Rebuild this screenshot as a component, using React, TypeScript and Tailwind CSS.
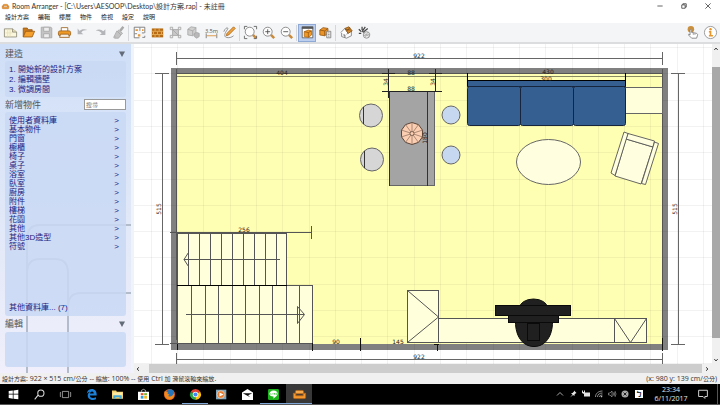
import type { ReactNode } from "react"

const uiFont = "font-['Open_Sans','Noto_Sans_CJK_TC',sans-serif]"
const titleFont = "font-['Lato','Noto_Sans_CJK_TC',sans-serif]"
const listFont = "font-['Liberation_Sans','Noto_Sans_CJK_TC',sans-serif]"

const menus = ["設計方案", "編輯", "樓層", "物件", "檢視", "設定", "說明"]

const steps = ["1. 開始新的設計方案", "2. 編輯牆壁", "3. 微調房間"]

const categories = [
  "使用者資料庫",
  "基本物件",
  "門窗",
  "櫥櫃",
  "椅子",
  "桌子",
  "浴室",
  "臥室",
  "廚房",
  "附件",
  "樓梯",
  "花園",
  "其他",
  "其他3D造型",
  "符號",
]

type Item = { label: string; icon: ReactNode; active?: boolean; running?: boolean }

const fileTools: Item[] = [
  {
    label: "新增",
    icon: (
      <g stroke="#8a8674" fill="#fbf7dc">
        <path d="M.5 3.500h10l5 4v6H.5z" />
        <path d="M4.500 4v9M7.500 4v9M2 8.500h8" stroke="#e6dfbd" />
        <path d="M10.500 3.500v4h5" fill="#e8dfb4" />
      </g>
    ),
  },
  {
    label: "開啟",
    icon: (
      <g stroke="#9a5a10">
        <path d="M1.500 13.500v-11h5l1 2h5v3" fill="#c9781c" />
        <path d="M1.500 13.500l3-7h11l-3 7z" fill="#f5a02c" />
      </g>
    ),
  },
  {
    label: "儲存",
    icon: (
      <g stroke="#a5a5a5" fill="#c4c4c4">
        <path d="M1.500 1.500h12l1 1v12h-13z" />
        <path d="M4.500 1.500h7v5h-7zM4.500 9.500h7v5h-7z" fill="#ededed" />
      </g>
    ),
  },
  {
    label: "列印",
    icon: (
      <g stroke="#9a5f1a">
        <path d="M4 7V2h8v5" fill="#fff" />
        <rect x="0.5" y="6" width="15" height="6" rx="2" fill="#f09a26" />
        <path d="M3 10h10l1 4H2z" fill="#f4efe5" />
      </g>
    ),
  },
  {
    label: "復原",
    icon: <path d="M2 3v7h7L6.5 8c1.500-2 4-3 7.500-3-4-2-7.500-1-9.500 1z" fill="#b3b5b8" />,
  },
  {
    label: "重做",
    icon: <path d="M14 4v7H7l2.500-2C8 7 5.500 5.500 2 5.500c4-2.500 7.500-1 9.500 1z" fill="#b3b5b8" />,
  },
  {
    label: "格式",
    icon: (
      <g fill="#c3c3c3" stroke="#a9a9a9">
        <path d="M14 1l-4 5" strokeWidth="3" />
        <path d="M8 5l5 4-2 2-4-4z" />
        <path d="M6 6l5 5-3 4H3l1-2-2 1z" />
      </g>
    ),
  },
]

const drawTools: Item[] = [
  {
    label: "房間",
    icon: (
      <g fill="none" stroke="#6b6b6b">
        <path d="M1.500 1.500h13v7M14.500 12v2h-3M8 14.500H1.500v-13" fill="#fff" />
        <path d="M8.500 2v4M2 9.500h3M11 8.500h3" />
        <path d="M3 4h3v2H3zM11 4h2v2h-2zM6 10h3v3H6z" fill="#e59a3a" stroke="none" />
      </g>
    ),
  },
  {
    label: "牆壁",
    icon: (
      <g>
        <path d="M1 3h14v11H1z" fill="#b66b14" />
        <path d="M1 6.500h14M1 10.500h14M5 3v3M10 3v3M3 7v3M8 7v3M13 7v3M5 11v3M10 11v3" stroke="#f0b965" />
      </g>
    ),
  },
  {
    label: "調整",
    icon: (
      <g stroke="#a2a2a2" fill="#c8c8c8">
        <rect x="4.500" y="4.500" width="7" height="7" />
        <path d="M1.500 1.500h3v3h-3zM11.500 1.500h3v3h-3zM1.500 11.500h3v3h-3zM11.500 11.500h3v3h-3z" fill="#ededed" />
        <path d="M4 4l8 8" />
      </g>
    ),
  },
  {
    label: "物件",
    icon: (
      <g stroke="#a5a5a5" fill="#d0d0d0">
        <path d="M1 4l4-3 6 1v7l-4 3-6-1z" />
        <path d="M1 4l6 2 4-4M7 6v6" fill="none" />
        <path d="M9 9l3-1 3 1v4l-3 2-3-2z" fill="#b8b8b8" />
      </g>
    ),
  },
  {
    label: "尺寸",
    icon: (
      <g stroke="#6d6d6d">
        <path d="M1.500 9v6M14.500 9v6" />
        <path d="M2 12h12" stroke="#d88a2a" />
        <text x="8" y="8" fontSize="7" textAnchor="middle" fill="#555" stroke="none">
          3.5m
        </text>
      </g>
    ),
  },
  {
    label: "繪製",
    icon: (
      <g>
        <path d="M1 7c2-6 7-6 4-2s-4 8-1 9 7 0 9-2" fill="none" stroke="#808080" />
        <path d="M4 12l1-3 8-8 2 2-8 8z" fill="#f2a33c" stroke="#a8661b" />
      </g>
    ),
  },
]

const lens = (inner: ReactNode) => (
  <g fill="none" stroke="#777">
    <path d="M11 11l4 4" stroke="#c98a3a" strokeWidth="3" />
    <circle cx="7" cy="7" r="5.500" fill="#fdfdfd" />
    {inner}
  </g>
)

const zoomTools: Item[] = [
  {
    label: "全部顯示",
    icon: (
      <g>
        {lens(null)}
        <path d="M.5 4V.5H4M12 .5h3.500V4M.5 12v3.500H4M12 15.500h3.500V12" fill="none" stroke="#555" />
      </g>
    ),
  },
  { label: "放大", icon: lens(<path d="M4 7h6M7 4v6" stroke="#444" />) },
  { label: "縮小", icon: lens(<path d="M4 7h6" stroke="#444" />) },
]

const panelTools: Item[] = [
  {
    label: "物件面板",
    active: true,
    icon: (
      <g stroke="#555">
        <path d="M1.500 1.500h13v13h-13z" fill="#fff" />
        <path d="M1 2h14" strokeWidth="3" />
        <path d="M4 7l5-2 4 1v5l-4 3-5-1z" fill="#f29a26" stroke="#b56a16" />
        <path d="M4 7l5 1 4-2M9 8v6" fill="none" stroke="#985710" />
      </g>
    ),
  },
  {
    label: "物件清單",
    icon: (
      <g stroke="#985710">
        <path d="M1 5l4-3 6 1v6l-4 3-6-1z" fill="#ea9428" />
        <path d="M1 5l6 1 4-3M7 6v6" fill="none" />
        <path d="M9.500 6.500h5v8h-5z" fill="#f5f5f5" stroke="#777" />
        <path d="M11 8.500h2M11 10.500h2M11 12.500h2" stroke="#888" />
      </g>
    ),
  },
]

const viewTools: Item[] = [
  {
    label: "3D",
    icon: (
      <g stroke="#777">
        <path d="M2 8v5l6 2 6-3V6" fill="#fafafa" />
        <path d="M1 8l5-5 4 6-2 1" fill="#fff" />
        <path d="M6 3l5-2 4 5-5 3z" fill="#d98b2b" stroke="#7c4d16" />
        <path d="M7 4l6 1M9 6l3-4" stroke="#7c4d16" />
        <path d="M4 11h2v3" fill="none" stroke="#555" />
      </g>
    ),
  },
  {
    label: "渲染",
    icon: (
      <g fill="none" stroke="#444">
        <path d="M9 1L5 7M12 3L6 8M1 4l3 3M1 9h3M5 1v4" strokeWidth="1.500" />
        <circle cx="10.500" cy="11" r="4" fill="#ededed" stroke="#888" />
        <path d="M7 9l7 4M9 14l3-7M7 12l8-2" stroke="#aaa" />
      </g>
    ),
  },
]

const helpTools: Item[] = [
  {
    label: "觸控",
    icon: (
      <g>
        <circle cx="6" cy="4" r="4" fill="#c98f3d" />
        <path d="M5 11V5q1-2 2 0v3l6 1q2 1 1 3l-1 3H7l-4-4q0-2 2 0z" fill="#fff" stroke="#777" />
        <path d="M9 8v3M11 9v2" stroke="#999" />
      </g>
    ),
  },
  {
    label: "關於",
    icon: (
      <g>
        <circle cx="8" cy="8" r="7.500" fill="#fff" stroke="#8a8a8a" />
        <path d="M6 7h2v5M6 12h5" fill="none" stroke="#e9952a" strokeWidth="2" />
        <circle cx="8" cy="4" r="1.500" fill="#e9952a" />
      </g>
    ),
  },
]

const taskbarApps: Item[] = [
  { label: "開始", icon: <path d="M1 3l6-1v5H1zM8 2l7-1v6H8zM1 8h6v6l-6-1zM8 8h7v7l-7-1z" fill="#fff" /> },
  {
    label: "搜尋",
    icon: (
      <g fill="none" stroke="#ddd" strokeWidth="1.500">
        <circle cx="10" cy="6" r="4.500" />
        <path d="M6 9l-5 6" />
      </g>
    ),
  },
  { label: "工作檢視", icon: <path d="M3.500 3.500h9v9h-9zM1.500 5h-1v6h1M14.500 5h1v6h-1" fill="none" stroke="#ccc" /> },
  {
    label: "Edge",
    icon: (
      <path
        d="M1 7C2 2 5 0 8.500 0 13 0 15.500 3.500 15.500 7.500V9.500H5.500c.5 4 5 4.500 9 2.500v3c-5 2.500-12 .5-12-5.500C2.500 7 4 5 6 4 3.500 4.300 2 5.500 1 7zM5.800 6.500h5.500C11.300 2.500 6.500 2.500 5.800 6.500z"
        fill="#1e7fd6"
      />
    ),
  },
  {
    label: "檔案總管",
    icon: (
      <g>
        <path d="M0 2h6l1 2h9v10H0z" fill="#f3cf6b" />
        <path d="M1 5h14v5H1z" fill="#fbe9a5" />
        <path d="M2 14V9h12v5h-3v-2H5v2z" fill="#45a9d8" />
      </g>
    ),
  },
  {
    label: "市集",
    icon: (
      <g>
        <path d="M5 4V2q3-3 6 0v2" fill="none" stroke="#eee" />
        <path d="M0 4h16v12H0z" fill="#fff" />
        <path d="M4 6h4v3H4z" fill="#e8502a" />
        <path d="M9 6h4v3H9z" fill="#7db52c" />
        <path d="M4 10h4v4H4z" fill="#2d9fe0" />
        <path d="M9 10h4v4H9z" fill="#f3b51c" />
      </g>
    ),
  },
  {
    label: "Firefox",
    icon: (
      <g>
        <circle cx="8" cy="8" r="8" fill="#e4601d" />
        <circle cx="9" cy="6" r="5.500" fill="#2774b8" />
        <path d="M1 3c1 1 3 1 5 2l-1 2 3 1-2 2c3 2 7 0 8-4 2 5-2 9-6 9S-1 11 1 3z" fill="#f28a1e" />
      </g>
    ),
  },
  {
    label: "Chrome",
    running: true,
    icon: (
      <g>
        <path d="M8 8L1 4A8 8 0 0 1 15 4z" fill="#e34133" />
        <path d="M8 8V16A8 8 0 0 1 1 4z" fill="#2ba24c" />
        <path d="M8 8V16A8 8 0 0 0 15 4z" fill="#fbc116" />
        <circle cx="8" cy="8" r="4" fill="#fff" />
        <circle cx="8" cy="8" r="3" fill="#4285f4" />
      </g>
    ),
  },
  {
    label: "媒體播放器",
    icon: (
      <g>
        <path d="M0 1h15v14H0z" fill="#7fa6bd" />
        <circle cx="7" cy="8" r="5.500" fill="#e77d32" stroke="#f5d3b8" />
        <path d="M5 5l6 3-6 3z" fill="#fff" />
      </g>
    ),
  },
  {
    label: "郵件",
    icon: (
      <g>
        <path d="M0 5l8-5 8 5v11H0z" fill="#fff" />
        <path d="M1 6h14L9 9l3 3-11-6z" fill="#111" />
      </g>
    ),
  },
  {
    label: "LINE",
    running: true,
    icon: (
      <g>
        <rect width="16" height="16" rx="2" fill="#1bb51b" />
        <path d="M8 2c4 0 6 2 6 5s-3 4-6 7v-3c-4 0-6-2-6-4s2-5 6-5z" fill="#fff" />
        <path d="M4 6v2h1M7 6v2M9 8V6l1 2V6M13 6h-1v2h1" fill="none" stroke="#1bb51b" strokeWidth=".8" />
      </g>
    ),
  },
  {
    label: "Room Arranger",
    active: true,
    running: true,
    icon: <SofaShape />,
  },
]

const tray: Item[] = [
  { label: "顯示隱藏的圖示", icon: <path d="M2 11l6-6 6 6" fill="none" stroke="#ddd" strokeWidth="1.500" /> },
  { label: "釘選", icon: <path d="M10 1l5 5-2 1-2 2v3l-3-2-6 5 5-6-3-3h3l3-3z" fill="#e8e8e8" /> },
  { label: "電池", icon: <path d="M0 1h2v3h2V1h2v4h10v8H4V8L0 6z" fill="#e5e5e5" /> },
  {
    label: "網路",
    icon: (
      <g fill="none" stroke="#bbb" strokeWidth="1.500">
        <path d="M1 14C1 7 7 2 15 2M5 14c0-5 4-8 10-8M9 14c0-3 2-4 6-4" />
        <circle cx="13" cy="13" r="1" fill="#fff" />
      </g>
    ),
  },
  {
    label: "音量",
    icon: <path d="M1 6h3l4-4v12l-4-4H1zM10 5q2 3 0 6M12 4q3 4 0 8M14 2q4 6 0 12" fill="none" stroke="#ccc" />,
  },
  {
    label: "狀態",
    icon: (
      <g>
        <circle cx="8" cy="8" r="7" fill="#aaa" />
        <path d="M5 5l6 6M11 5l-6 6" stroke="#222" strokeWidth="2" />
      </g>
    ),
  },
]

function SofaShape() {
  return (
    <g stroke="#b4661a">
      <path d="M3 7V4.500Q3 3 4.500 3h7Q13 3 13 4.500V7z" fill="#f6a94a" />
      <path d="M.5 6.500h3v3h9v-3h3v5q0 1.500-1.500 1.500H2Q.5 13 .5 11.500z" fill="#f2962d" />
    </g>
  )
}

function Icon({ children, className }: { children: ReactNode; className: string }) {
  return (
    <svg viewBox="0 0 16 16" className={`${className} overflow-visible`} aria-hidden="true">
      {children}
    </svg>
  )
}

function ToolGroup({ items }: { items: Item[] }) {
  return (
    <div className="flex">
      {items.map((item) => (
        <button
          key={item.label}
          aria-label={item.label}
          className={`flex h-[18px] w-[18px] items-center justify-center ${
            item.active ? "border border-[#8fa9d6] bg-[#bccfee]" : ""
          }`}
        >
          <Icon className="h-[13px] w-[13px] shrink-0">{item.icon}</Icon>
        </button>
      ))}
    </div>
  )
}

function Separator() {
  return <div className="mx-px h-4 w-px bg-[#d5d7da]" />
}

function TitleBar() {
  return (
    <header className="flex h-3 items-center bg-white pl-[2px] text-[7px] leading-3 text-[#333]">
      <Icon className="mr-[3px] h-[7px] w-[7px]">
        <SofaShape />
      </Icon>
      <h1 className={`flex-1 whitespace-nowrap ${titleFont}`}>
        Room Arranger - [C:\Users\AESOOP\Desktop\設計方案.rap] - 未註冊
      </h1>
      {[
        { label: "最小化", d: "M1 8h14" },
        { label: "還原", d: "M2 5h9v9H2zM5 5V2h9v9h-3" },
        { label: "關閉", d: "M1 1l14 14M15 1L1 15" },
      ].map((control) => (
        <button key={control.label} aria-label={control.label} className="flex w-6 justify-center">
          <Icon className="h-[6px] w-[6px]">
            <path d={control.d} fill="none" stroke="#333" strokeWidth="2" />
          </Icon>
        </button>
      ))}
    </header>
  )
}

function SidebarHeading({ children }: { children: ReactNode }) {
  return (
    <div className="flex h-[14px] items-center justify-between pr-px text-[#555]">
      <h2 className="text-[9px] leading-[14px]">{children}</h2>
      <button aria-label="收合" className="flex w-[6px]">
        <Icon className="h-[6px] w-[6px]">
          <path d="M0 1h16L8 16z" fill="#626b78" />
        </Icon>
      </button>
    </div>
  )
}

function Sidebar() {
  return (
    <aside
      className={`relative flex w-[131px] shrink-0 flex-col bg-linear-to-b from-[#cfdff7] via-[#e0e8f8] to-[#f0effb] px-[5px] pt-[3px] pb-[6px] text-[8px] text-[#1b1b80] ${listFont}`}
    >
      <svg viewBox="0 0 131 329" preserveAspectRatio="none" className="absolute inset-0 h-full w-full" aria-hidden="true">
        <path
          d="M131 181H40q-13 0-13 14V329M27 229q0-14 13-14h15q13 0 13 14V329M68 263q0-14 13-14h50"
          fill="none"
          stroke="#b3bccb"
          strokeWidth="2"
        />
      </svg>
      <div className="relative flex flex-1 flex-col">
        <SidebarHeading>建造</SidebarHeading>
        <div className="flex flex-col rounded-[3px] bg-[#c9d8f5]/85 px-1 pt-1 pb-[2px] leading-[10px]">
          {steps.map((step) => (
            <button key={step} className="text-left">
              {step}
            </button>
          ))}
        </div>
        <div className="flex h-[15px] items-center justify-between text-[#555]">
          <h2 className="text-[9px] leading-[14px]">新增物件</h2>
          <input
            type="search"
            aria-label="搜尋物件"
            placeholder="搜尋"
            className="h-[11px] w-[42px] border border-[#999] bg-white pl-px text-[6px] leading-[9px] placeholder:text-[#777]"
          />
        </div>
        <nav className="flex flex-1 flex-col rounded-[3px] bg-[#c9d8f5]/85 px-1 pt-1 pb-1 leading-[9px]">
          <ul>
            {categories.map((category) => (
              <li key={category}>
                <a href="#" className="flex justify-between pr-[3px]">
                  <span>{category}</span>
                  <span>&gt;</span>
                </a>
              </li>
            ))}
          </ul>
          <a href="#" className="mt-auto">
            其他資料庫... (7)
          </a>
        </nav>
        <div className="py-px">
          <SidebarHeading>編輯</SidebarHeading>
        </div>
        <div className="h-[35px] rounded-[3px] bg-[#c9d8f5]/85" />
      </div>
    </aside>
  )
}

const gridX = Array.from({ length: 22 }, (_, i) => Math.round(150.7 + i * 26.3) + 0.5)
const gridY = Array.from({ length: 13 }, (_, i) => Math.round(47 + i * 26.3) + 0.5)
const upperTreads = Array.from({ length: 9 }, (_, i) => 188.5 + i * 11)
const lowerTreads = Array.from({ length: 9 }, (_, i) => Math.round(191 + i * 13.5) + 0.5)
const umbrella = Array.from({ length: 10 }, (_, i) => {
  const a = ((i * 36 + 18) * Math.PI) / 180
  return [412 + 11 * Math.cos(a), 133.5 + 11 * Math.sin(a)]
})

function Dim({ x, y, children, turned }: { x: number; y: number; children: string; turned?: boolean }) {
  return (
    <text
      x={x}
      y={y}
      textAnchor="middle"
      dominantBaseline="central"
      transform={turned ? `rotate(-90 ${x} ${y})` : undefined}
      fontSize="6"
      fill="#222"
      stroke="none"
    >
      {children}
    </text>
  )
}

function FloorPlan() {
  return (
    <svg
      viewBox="134 44 578 320"
      className="block w-full bg-white font-['DejaVu_Sans',sans-serif]"
      role="img"
      aria-label="平面圖"
    >
      <rect x="171" y="68" width="497" height="282" fill="#808080" />
      <rect x="177" y="74" width="485" height="270" fill="#ffffb4" />
      <g stroke="#000" strokeOpacity=".05">
        {gridX.map((x) => (
          <path key={x} d={`M${x} 44V364`} />
        ))}
        {gridY.map((y) => (
          <path key={y} d={`M134 ${y}H712`} />
        ))}
      </g>

      {/* overall dimensions */}
      <g fill="none" stroke="#666">
        <path d="M176.500 58.500H662.500M176.500 52v13M662.500 52v13" />
        <path d="M176.500 359.500H662.500M176.500 353v11M662.500 353v11" />
        <path d="M162.500 73.500V344.500M155 73.500h14M155 344.500h14" />
        <path d="M678.500 73.500V344.500M671 73.500h14M671 344.500h14" />
        <path d="M177 76.500H662" stroke="#8a8a62" />
      </g>
      <path d="M176.500 73.500H662M176.500 69v271M662.500 69v275" stroke="#555" fill="none" />

      {/* stairs */}
      <g fill="#ffffdc" stroke="#555">
        <rect x="177.500" y="233.500" width="109" height="52" />
        <path d={upperTreads.map((x) => `M${x} 233V285`).join("")} />
        <rect x="177.500" y="285.500" width="135" height="58" />
        <path d={lowerTreads.map((x) => `M${x} 286V344`).join("")} />
        <g fill="none">
          <path d="M184 259.500H280M188.500 252.500V266.500L184 259.500z" />
          <path d="M186 314.500H304M297.500 306.500V323.500L304.500 314.500z" />
          <path d="M170 232.500H312M311.500 226v13M170 343.500h8" />
        </g>
        <path d="M177 285.500H287" stroke="#000" />
      </g>

      {/* bar with stools */}
      <g stroke="#666">
        <circle cx="371" cy="115.500" r="11.500" fill="#d6d6d6" />
        <circle cx="372" cy="159.500" r="11.500" fill="#d6d6d6" />
        <path d="M363.500 107v17M364.500 151v17" stroke="#333" />
        <circle cx="451" cy="115" r="9" fill="#c6d8f0" />
        <circle cx="451" cy="155" r="9" fill="#c6d8f0" />
        <rect x="389.500" y="91.500" width="45" height="94" fill="#a4a4a4" />
      </g>
      <path d="M427.500 91V186M389.500 91V186" stroke="#333" />
      <path d="M388.500 69v29M435.500 69v22M382 73.500h13M429 73.500h13M382 91.500h60" stroke="#222" />
      <polygon points={umbrella.map((p) => p.join(",")).join(" ")} fill="#fccfb2" stroke="#5a463b" />
      {umbrella.map(([x, y]) => (
        <path key={x + y} d={`M412 133.500L${x} ${y}`} stroke="#8a6a59" strokeWidth=".7" />
      ))}
      <circle cx="412" cy="133.500" r="2" fill="#fccfb2" stroke="#5a463b" strokeWidth=".7" />

      {/* sofa and shelf */}
      <rect x="625.500" y="87.500" width="37" height="26" fill="#ffffdc" stroke="#666" />
      <g fill="#365f91" stroke="#17253c">
        <rect x="467.500" y="80.500" width="158" height="6" />
        <rect x="467.500" y="86.500" width="53" height="39" rx="2" />
        <rect x="520.500" y="86.500" width="53" height="39" rx="2" />
        <rect x="573.500" y="86.500" width="52" height="39" rx="2" />
        <path d="M467 80.500h159M467.500 73v13M625.500 73v13" stroke="#000" />
      </g>

      <ellipse cx="548.500" cy="162" rx="32" ry="22.500" fill="#ffffe0" stroke="#666" />

      {/* armchair */}
      <g fill="#ffffe0" stroke="#555" strokeWidth=".9">
        <path d="M626 139L653 147 641 184 615 176z" />
        <path d="M628 133.500L654.500 141 653 147 626 139z" />
        <path d="M624 132L628 133.500 615 175.500 611 173z" />
        <path d="M654.500 142L658.500 143.500 645.500 184.500 641.500 183.500z" />
      </g>

      {/* cabinets and TV */}
      <g fill="#ffffdc" stroke="#555">
        <rect x="438.500" y="318.500" width="208" height="24" />
        <rect x="407.500" y="290.500" width="31" height="52" />
        <path d="M407.500 290.500L438.500 317 407.500 342.500" fill="none" />
        <path d="M614.500 342.500v-24l16 24 16-24" fill="none" />
      </g>
      <g fill="#202020" stroke="#0a0a0a">
        <ellipse cx="533.500" cy="308" rx="14" ry="9" />
        <path d="M515.500 322h37c0 14-7 24.500-18.500 24.500S515.500 336 515.500 322z" />
        <rect x="508.500" y="314.500" width="50" height="8" />
        <rect x="495.500" y="305.500" width="75" height="10" />
        <rect x="527.500" y="323.500" width="12" height="17" />
      </g>

      <path d="M312.500 343v8M360.500 338v13M437.500 344v7M434 344.500h5M662.500 338v13M177.500 344v6" stroke="#111" fill="none" />

      <Dim x={419} y={55}>922</Dim>
      <Dim x={419} y={356}>922</Dim>
      <Dim x={158} y={209} turned>515</Dim>
      <Dim x={674} y={209} turned>515</Dim>
      <Dim x={282} y={72}>404</Dim>
      <Dim x={411} y={72}>88</Dim>
      <Dim x={548} y={71}>430</Dim>
      <Dim x={546} y={78}>300</Dim>
      <Dim x={411} y={88}>88</Dim>
      <Dim x={385} y={82} turned>34</Dim>
      <Dim x={432} y={82} turned>34</Dim>
      <Dim x={424} y={138} turned>180</Dim>
      <Dim x={244} y={229}>256</Dim>
      <Dim x={336} y={341}>90</Dim>
      <Dim x={398} y={341}>145</Dim>
    </svg>
  )
}

function ScrollArrow({ d, label }: { d: string; label: string }) {
  return (
    <button aria-label={label} className="flex h-[9px] w-2 shrink-0 items-center justify-center">
      <Icon className="h-1 w-1">
        <path d={d} fill="none" stroke="#444" strokeWidth="4" />
      </Icon>
    </button>
  )
}

function Canvas() {
  return (
    <section className="flex min-w-0 flex-1 flex-col">
      <div className="flex flex-1 items-stretch">
        <div className="min-w-0 flex-1">
          <FloorPlan />
        </div>
        <div className="flex w-2 flex-col bg-[#f0f0f0]">
          <ScrollArrow label="向上" d="M1 12l7-8 7 8" />
          <div className="flex-1 pt-[14px] pb-[17px]">
            <div className="h-full bg-[#a8a8a8]" />
          </div>
          <ScrollArrow label="向下" d="M1 4l7 8 7-8" />
        </div>
      </div>
      <div className="flex h-[9px] items-center bg-[#f0f0f0] pr-[9px]">
        <ScrollArrow label="向左" d="M12 1L4 8l8 7" />
        <div className="h-full flex-1 bg-[#cdcdcd] bg-clip-content pr-px pl-[7px]" />
        <ScrollArrow label="向右" d="M4 1l8 7-8 7" />
      </div>
    </section>
  )
}

// CJK glyphs in the status line are set one step smaller than the latin text
function Cjk({ children }: { children: string }) {
  return <span className="text-[6px]">{children}</span>
}

function StatusBar() {
  return (
    <div className="flex h-[11px] items-center justify-between bg-[#f0f0f0] pr-[3px] pl-[2px] text-[7px] leading-[11px] text-[#333]">
      <p>
        <Cjk>設計方案</Cjk>: 922 × 515 cm/<Cjk>公分</Cjk> -- <Cjk>縮放</Cjk>: 100% -- <Cjk>使用</Cjk> Ctrl <Cjk>加</Cjk>{" "}
        <Cjk>滑鼠滾輪來縮放</Cjk>.
      </p>
      <p>
        (x: 980 y: 139 cm/<Cjk>公分</Cjk>)
      </p>
    </div>
  )
}

function Taskbar() {
  return (
    <footer className="flex h-[21px] items-stretch border-b border-[#555] bg-black text-[#e5e5e5]">
      <div className="flex flex-1">
        {taskbarApps.map((app) => (
          <button
            key={app.label}
            aria-label={app.label}
            className={`flex w-[26px] items-center justify-center ${
              app.running ? "border-y border-t-transparent border-b-[#7fa8d8]" : ""
            } ${app.active ? "bg-[#383838]" : ""}`}
          >
            <Icon className={app.active ? "h-[13px] w-[13px]" : "h-[11px] w-[11px]"}>{app.icon}</Icon>
          </button>
        ))}
      </div>
      <div className="flex items-center">
        {tray.map((item) => (
          <button key={item.label} aria-label={item.label} className="flex w-[13px] justify-center">
            <Icon className="h-2 w-2">{item.icon}</Icon>
          </button>
        ))}
        <button aria-label="輸入法" className="mx-1 h-2 w-2 bg-white text-[6px] leading-2 font-bold text-black">
          ㄅ
        </button>
        <time className="w-12 text-center text-[7px] leading-[9px]">
          23:34
          <br />
          6/11/2017
        </time>
        <button aria-label="通知" className="mr-[9px] ml-[3px] flex">
          <Icon className="h-[10px] w-[10px]">
            <path d="M1 2h14v10h-4v3l-3-3H1z" fill="none" stroke="#ddd" strokeWidth="1.500" />
          </Icon>
        </button>
        <div className="mr-[2px] h-full w-px bg-[#555]" />
      </div>
    </footer>
  )
}

export default function App() {
  return (
    <div className={`flex min-h-screen flex-col bg-white ${uiFont}`}>
      <TitleBar />
      <nav className="flex h-[11px] items-center gap-[9px] bg-white px-[5px] text-[6px] leading-[11px] text-[#222]">
        {menus.map((menu) => (
          <button key={menu}>{menu}</button>
        ))}
      </nav>
      <div className="flex h-[21px] items-center border-b-2 border-[#dcdddf] bg-[#f4f5f7] px-px">
        <ToolGroup items={fileTools} />
        <Separator />
        <ToolGroup items={drawTools} />
        <Separator />
        <ToolGroup items={zoomTools} />
        <Separator />
        <ToolGroup items={panelTools} />
        <Separator />
        <ToolGroup items={viewTools} />
        <div className="flex-1" />
        <ToolGroup items={helpTools} />
      </div>
      <main className="flex flex-1 bg-[#eff4fa]">
        <Sidebar />
        <div className="w-[3px] shrink-0" />
        <Canvas />
      </main>
      <StatusBar />
      <Taskbar />
    </div>
  )
}
